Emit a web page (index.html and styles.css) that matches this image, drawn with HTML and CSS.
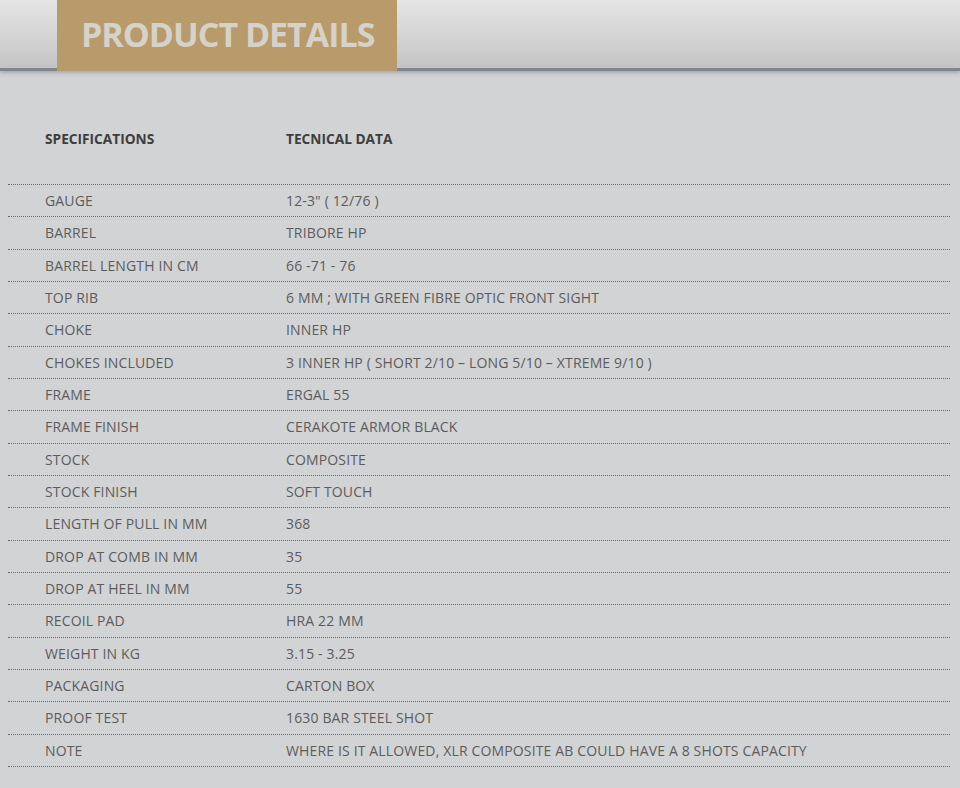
FILE: index.html
```html
<!DOCTYPE html>
<html>
<head>
<meta charset="utf-8">
<link rel="stylesheet" href="styles.css">
</head>
<body>
<header class="band">
  <div class="tab"><h1 class="title">PRODUCT DETAILS</h1></div>
</header>
<main class="content">
  <div class="head-row">
    <div class="c1">SPECIFICATIONS</div>
    <div class="c2">TECNICAL DATA</div>
  </div>
  <div class="table">
    <div class="row"><div class="c1">GAUGE</div><div class="c2">12-3" ( 12/76 )</div></div>
    <div class="row"><div class="c1">BARREL</div><div class="c2">TRIBORE HP</div></div>
    <div class="row"><div class="c1">BARREL LENGTH IN CM</div><div class="c2">66 -71 - 76</div></div>
    <div class="row"><div class="c1">TOP RIB</div><div class="c2">6 MM ; WITH GREEN FIBRE OPTIC FRONT SIGHT</div></div>
    <div class="row"><div class="c1">CHOKE</div><div class="c2">INNER HP</div></div>
    <div class="row"><div class="c1">CHOKES INCLUDED</div><div class="c2">3 INNER HP ( SHORT 2/10 – LONG 5/10 – XTREME 9/10 )</div></div>
    <div class="row"><div class="c1">FRAME</div><div class="c2">ERGAL 55</div></div>
    <div class="row"><div class="c1">FRAME FINISH</div><div class="c2">CERAKOTE ARMOR BLACK</div></div>
    <div class="row"><div class="c1">STOCK</div><div class="c2">COMPOSITE</div></div>
    <div class="row"><div class="c1">STOCK FINISH</div><div class="c2">SOFT TOUCH</div></div>
    <div class="row"><div class="c1">LENGTH OF PULL IN MM</div><div class="c2">368</div></div>
    <div class="row"><div class="c1">DROP AT COMB IN MM</div><div class="c2">35</div></div>
    <div class="row"><div class="c1">DROP AT HEEL IN MM</div><div class="c2">55</div></div>
    <div class="row"><div class="c1">RECOIL PAD</div><div class="c2">HRA 22 MM</div></div>
    <div class="row"><div class="c1">WEIGHT IN KG</div><div class="c2">3.15 - 3.25</div></div>
    <div class="row"><div class="c1">PACKAGING</div><div class="c2">CARTON BOX</div></div>
    <div class="row"><div class="c1">PROOF TEST</div><div class="c2">1630 BAR STEEL SHOT</div></div>
    <div class="row"><div class="c1">NOTE</div><div class="c2">WHERE IS IT ALLOWED, XLR COMPOSITE AB COULD HAVE A 8 SHOTS CAPACITY</div></div>
  </div>
</main>
</body>
</html>
```
FILE: styles.css
```css
html, body {
  margin: 0;
  padding: 0;
}
body {
  background: #d2d3d5;
  font-family: "Open Sans", "Liberation Sans", sans-serif;
  width: 960px;
  height: 788px;
  overflow: hidden;
}
.band {
  height: 68px;
  background: linear-gradient(#e5e5e5, #c4c4c4);
  border-bottom: 3px solid #80878b;
  box-shadow: 0 2px 4px rgba(110, 118, 124, 0.45);
  padding-left: 57px;
}
.tab {
  width: 340px;
  height: 71px;
  background: #b99a6a;
  display: flex;
  align-items: center;
  position: relative;
  z-index: 1;
}
.title {
  margin: 0 0 0 24px;
  font-size: 34px;
  font-weight: 700;
  color: #d5d2cb;
  letter-spacing: -1px;
  line-height: 1;
  padding-bottom: 4px;
}
.content {
  padding: 0 10px 0 8px;
}
.head-row {
  display: flex;
  height: 92px;
  padding-top: 21px;
  align-items: center;
  font-weight: 700;
  font-size: 13.7px;
  color: #3d3d3d;
}
.c1 {
  width: 241px;
  padding-left: 37px;
  flex: none;
}
.c2 {
  flex: 1;
}
.table {
  border-top: 1px dotted #6a6a6a;
}
.row {
  display: flex;
  align-items: center;
  height: 31.33px;
  border-bottom: 1px dotted #6a6a6a;
  font-size: 14px;
  color: #5c5c5c;
  letter-spacing: 0.15px;
}
```
